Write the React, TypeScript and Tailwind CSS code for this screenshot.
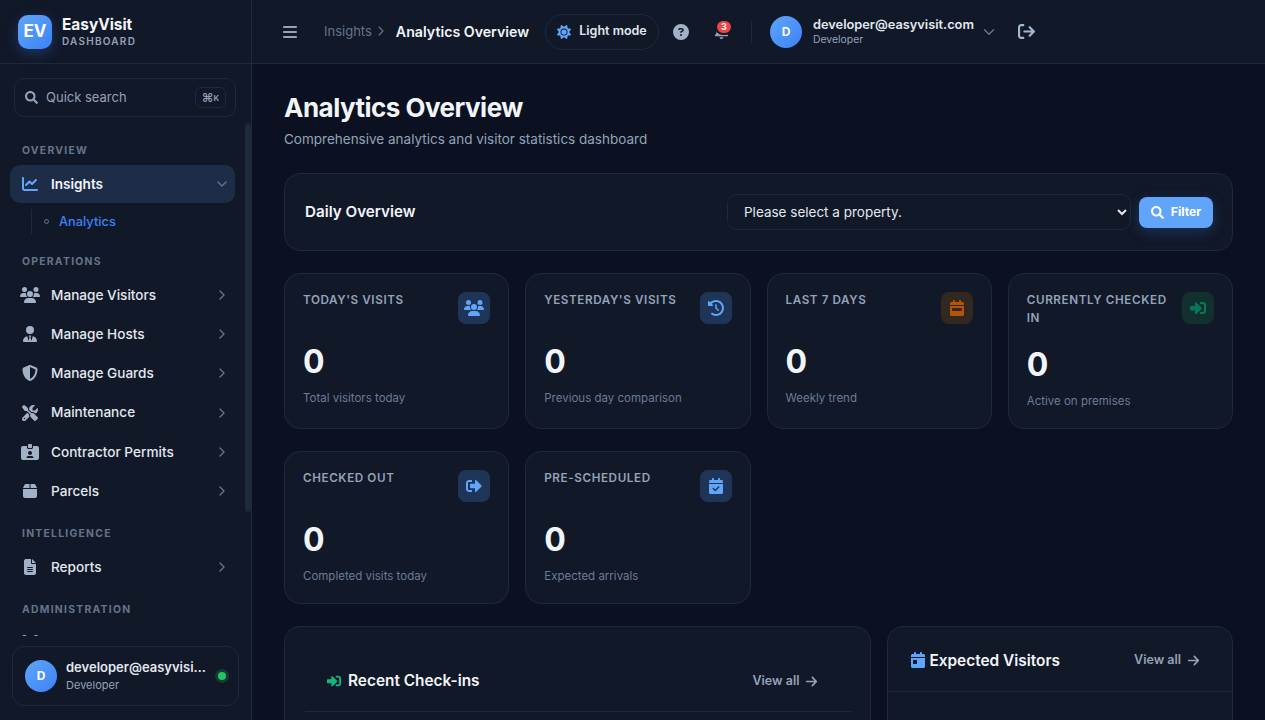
import React from "react";
import { ChevronDown, ChevronRight } from "lucide-react";
import {
  FaBars, FaBell, FaBox, FaCalendarCheck, FaCalendarDay, FaCalendarWeek, FaChartLine,
  FaCircleQuestion, FaClockRotateLeft, FaArrowRight, FaArrowRightFromBracket,
  FaFileLines, FaIdCardClip, FaScrewdriverWrench, FaShieldHalved, FaSun, FaUsers, FaUserTie, FaUsersGear,
} from "react-icons/fa6";
import { FaSearch, FaSignInAlt, FaSignOutAlt } from "react-icons/fa";

type IconT = React.ComponentType<{ className?: string }>;

function Section({ label, className }: { label: string; className: string }) {
  return (
    <div className={`flex h-[14px] items-center pl-3 text-[10.4px] font-bold uppercase tracking-[0.12em] text-[#64748b] ${className}`}>
      {label}
    </div>
  );
}

function NavItem({ icon: Icon, label, size = "text-[16px]" }: { icon: IconT; label?: string; size?: string }) {
  return (
    <div className="mb-[2px] flex h-[37.2px] items-center rounded-[10px] pl-[10px] pr-[5px] text-[13.6px] font-medium text-[#e2e8f0]">
      <span className="flex w-[20px] justify-center text-[#a3b1c6]">
        <Icon className={size} />
      </span>
      <span className="ml-[11px] flex-1">{label}</span>
      {label && <ChevronRight size={16} strokeWidth={2} className="text-[#64748b]" />}
    </div>
  );
}

function Stat({
  title, value, desc, icon: Icon, box, color, size = "text-[16px]",
}: { title: string; value: string; desc: string; icon: IconT; box: string; color: string; size?: string }) {
  return (
    <div className="rounded-2xl border border-[#1e293b] bg-[#111827] p-[18px]">
      <div className="flex items-start justify-between gap-3">
        <div className="text-[11.7px] font-semibold uppercase leading-[17.5px] tracking-[0.05em] text-[#94a3b8]">{title}</div>
        <div className={`flex h-8 w-8 shrink-0 items-center justify-center rounded-lg ${box} ${color}`}>
          <Icon className={size} />
        </div>
      </div>
      <div className="mb-[7px] mt-[18px] text-[32px] font-bold leading-10 text-[#f1f5f9]">{value}</div>
      <div className="text-[11.5px] leading-[18px] text-[#6b7c96]">{desc}</div>
    </div>
  );
}

function Avatar() {
  return (
    <div className="flex h-8 w-8 shrink-0 items-center justify-center rounded-full bg-gradient-to-br from-[#60a5fa] to-[#3b82f6] text-xs font-bold text-white">
      D
    </div>
  );
}

function ViewAll() {
  return (
    <div className="flex items-center gap-[6px] text-[12.5px] font-semibold text-[#94a3b8]">
      View all <FaArrowRight className="text-[13px]" />
    </div>
  );
}

export default function App() {
  return (
    <div className="flex h-screen overflow-hidden bg-[#0b1120] font-['Inter',sans-serif] text-[#e2e8f0]">
      <aside className="flex w-[252px] shrink-0 flex-col border-r border-[#1e293b] bg-[#111827]">
        <div className="flex h-16 shrink-0 items-center gap-[10px] border-b border-[#1e293b] pl-[18px]">
          <div className="flex h-[34px] w-[34px] items-center justify-center rounded-[10px] bg-gradient-to-br from-[#60a5fa] to-[#3b82f6] text-[17px] font-bold text-white shadow-[0_4px_14px_rgba(59,130,246,0.3)]">
            EV
          </div>
          <div>
            <div className="text-[15.4px] font-bold leading-[18px] text-[#f1f5f9]">EasyVisit</div>
            <div className="text-[10px] font-semibold leading-[14px] tracking-[0.125em] text-[#94a3b8]">DASHBOARD</div>
          </div>
        </div>
        <div className="shrink-0 pb-[6px] pl-[14px] pr-[15px] pt-[14px]">
          <div className="flex h-[39px] items-center rounded-[10px] border border-[#1e293b] pl-[10px] pr-[9px]">
            <FaSearch className="text-[13px] text-[#94a3b8]" />
            <span className="ml-2 flex-1 text-[13px] text-[#94a3b8]">Quick search</span>
            <span className="flex h-[21px] w-[31px] items-center justify-center rounded-md border border-[#1e293b] font-semibold text-[#94a3b8]">
              <span className="text-[12px]">⌘</span><span className="text-[8px]">K</span>
            </span>
          </div>
        </div>
        <div className="relative min-h-0 flex-1">
          <nav className="h-full overflow-hidden pl-[10px] pr-[16px]">
            <Section label="Overview" className="mb-[7px] mt-[21px]" />
            <div className="flex h-[38px] items-center rounded-[10px] bg-[#1e2d47] pl-[10px] pr-[5px] text-[13.6px] font-semibold text-[#f1f5f9]">
              <span className="flex w-[20px] justify-center"><FaChartLine className="text-[16px] text-[#60a5fa]" /></span>
              <span className="ml-[11px] flex-1">Insights</span>
              <ChevronDown size={16} strokeWidth={2} className="text-[#64748b]" />
            </div>
            <div className="ml-[21px] mt-[6px] flex h-[25px] items-center border-l border-[#1e293b] pl-3">
              <span className="h-[5px] w-[5px] rounded-full border border-[#64748b]" />
              <span className="ml-[10px] text-[12.8px] font-medium text-[#3b82f6]">Analytics</span>
            </div>
            <Section label="Operations" className="mb-[8px] mt-[20.5px]" />
            <NavItem icon={FaUsers} label="Manage Visitors" size="text-[20px]" />
            <NavItem icon={FaUserTie} label="Manage Hosts" />
            <NavItem icon={FaShieldHalved} label="Manage Guards" />
            <NavItem icon={FaScrewdriverWrench} label="Maintenance" />
            <NavItem icon={FaIdCardClip} label="Contractor Permits" size="text-[18px]" />
            <NavItem icon={FaBox} label="Parcels" />
            <Section label="Intelligence" className="mb-[7.5px] mt-[17px]" />
            <NavItem icon={FaFileLines} label="Reports" />
            <Section label="Administration" className="mb-[8px] mt-[17px]" />
            <NavItem icon={FaUsersGear} size="text-[20px]" />
          </nav>
          <div className="absolute right-0 top-0 h-[389px] w-[6px] rounded-[3px] bg-[#1e293b]" />
        </div>
        <div className="shrink-0 px-3 pb-[14px] pt-[10px]">
          <div className="flex h-[60px] items-center rounded-xl border border-[#1e293b] pl-3 pr-[12px]">
            <Avatar />
            <div className="ml-[9px] min-w-0 flex-1">
              <div className="truncate text-[13px] font-semibold leading-[18px] text-[#e2e8f0]">developer@easyvisit.com</div>
              <div className="text-[11px] leading-[18px] text-[#94a3b8]">Developer</div>
            </div>
            <span className="ml-[12px] h-2 w-2 shrink-0 rounded-full bg-[#22c55e] shadow-[0_0_0_3px_rgba(34,197,94,0.2)]" />
          </div>
        </div>
      </aside>

      <div className="flex min-w-0 flex-1 flex-col">
        <header className="flex h-16 shrink-0 items-center border-b border-[#1e293b] bg-[#111827] pl-[30px]">
          <FaBars className="text-[16px] text-[#94a3b8]" />
          <div className="ml-[26px] flex w-[221px] items-center whitespace-nowrap">
            <span className="text-[13px] text-[#64748b]">Insights</span>
            <ChevronRight size={16} strokeWidth={1.75} className="ml-[1px] text-[#64748b]" />
            <span className="ml-[7px] text-[14.2px] font-semibold text-[#f1f5f9]">Analytics Overview</span>
          </div>
          <div className="flex h-9 w-[114px] items-center justify-center gap-[8px] rounded-full border border-[#1e293b] text-[12.5px] font-semibold text-[#e2e8f0]">
            <FaSun className="text-[14px] text-[#60a5fa]" />
            Light mode
          </div>
          <FaCircleQuestion className="ml-[14px] text-[16px] text-[#a3b1c6]" />
          <div className="relative ml-[24px] flex w-[16px] justify-center">
            <FaBell className="text-[15px] text-[#94a3b8]" />
            <span className="absolute -right-[4px] -top-[5px] flex h-[16px] w-[18px] items-center justify-center rounded-full border-2 border-[#111827] bg-[#ef4444] text-[9px] font-bold text-white">3</span>
          </div>
          <div className="ml-[22px] h-[22px] w-px bg-[#1e293b]" />
          <div className="ml-[18px]"><Avatar /></div>
          <div className="ml-[11px] w-[160px] whitespace-nowrap">
            <div className="text-[12.8px] font-semibold leading-[16px] text-[#e2e8f0]">developer@easyvisit.com</div>
            <div className="text-[10.4px] leading-[14px] text-[#94a3b8]">Developer</div>
          </div>
          <ChevronDown size={18} strokeWidth={2} className="ml-[7px] text-[#64748b]" />
          <FaArrowRightFromBracket className="ml-[20px] text-[17px] text-[#a3b8d0]" />
        </header>

        <main className="min-h-0 flex-1 overflow-hidden p-8">
          <h1 className="text-[26px] font-bold leading-[24px] tracking-[-0.02em] text-[#f1f5f9]">Analytics Overview</h1>
          <p className="mt-[8px] text-[13.5px] leading-[22px] text-[#94a3b8]">Comprehensive analytics and visitor statistics dashboard</p>

          <div className="mt-[23px] flex h-[78px] items-center justify-between rounded-2xl border border-[#1e293b] bg-[#111827] pl-5 pr-[19px]">
            <div className="text-[15.2px] font-semibold text-[#f1f5f9]">Daily Overview</div>
            <div className="flex items-center gap-2">
              <select className="h-9 w-[404px] rounded-[10px] border border-[#1e293b] bg-[#111827] pl-[12px] text-[13.5px] text-[#e2e8f0] [color-scheme:dark]">
                <option>Please select a property.</option>
              </select>
              <div className="flex h-[31px] w-[74px] items-center justify-center gap-[7px] rounded-lg bg-[#60a5fa] text-[12.2px] font-bold text-white shadow-[0_4px_14px_rgba(59,130,246,0.25)]">
                <FaSearch className="text-[13px]" /> Filter
              </div>
            </div>
          </div>

          <div className="mt-[22px] grid grid-cols-4 gap-x-4 gap-y-[22px]">
            <Stat title="Today's Visits" value="0" desc="Total visitors today" icon={FaUsers} box="bg-[#1f3557]" color="text-[#60a5fa]" size="text-[20px]" />
            <Stat title="Yesterday's Visits" value="0" desc="Previous day comparison" icon={FaClockRotateLeft} box="bg-[#1f3557]" color="text-[#60a5fa]" />
            <Stat title="Last 7 Days" value="0" desc="Weekly trend" icon={FaCalendarWeek} box="bg-[#33281f]" color="text-[#b45309]" />
            <Stat title="Currently Checked In" value="0" desc="Active on premises" icon={FaSignInAlt} box="bg-[#12312e]" color="text-[#047857]" />
            <Stat title="Checked Out" value="0" desc="Completed visits today" icon={FaSignOutAlt} box="bg-[#1f3557]" color="text-[#60a5fa]" />
            <Stat title="Pre-Scheduled" value="0" desc="Expected arrivals" icon={FaCalendarCheck} box="bg-[#1f3557]" color="text-[#60a5fa]" />
          </div>

          <div className="mt-[22px] grid grid-cols-[1.7fr_1fr] gap-4">
            <div className="h-[300px] rounded-2xl border border-[#1e293b] bg-[#111827] py-5 pl-5 pr-[19px]">
              <div className="flex h-[65px] items-center justify-between border-b border-[#1e293b] pl-[22px] pr-[33px] pt-[4px]">
                <div className="flex items-center gap-[7px] text-[15.4px] font-semibold text-[#f1f5f9]">
                  <FaSignInAlt className="text-[14px] text-[#10b981]" /> Recent Check-ins
                </div>
                <ViewAll />
              </div>
            </div>
            <div className="h-[300px] rounded-2xl border border-[#1e293b] bg-[#111827]">
              <div className="flex h-[65px] items-center justify-between border-b border-[#1e293b] pl-[22px] pr-[32px] pt-[3px]">
                <div className="flex items-center gap-[3px] text-[15.4px] font-semibold text-[#f1f5f9]">
                  <FaCalendarDay className="text-[16px] text-[#60a5fa]" /> Expected Visitors
                </div>
                <ViewAll />
              </div>
            </div>
          </div>
        </main>
      </div>
    </div>
  );
}
